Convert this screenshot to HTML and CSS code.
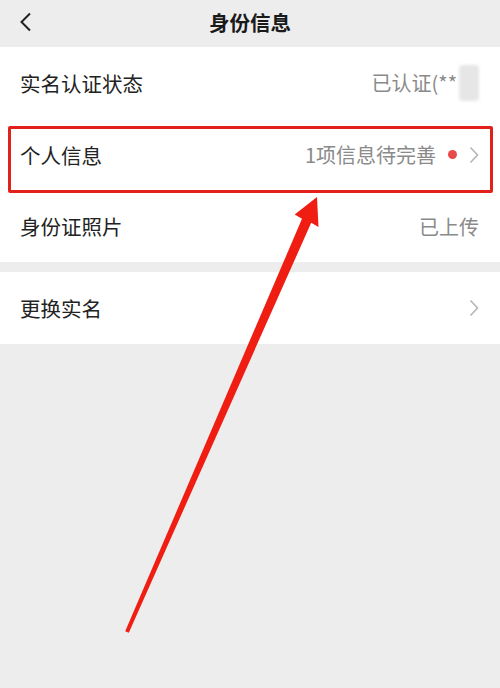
FILE: index.html
```html
<!DOCTYPE html>
<html lang="zh">
<head>
<meta charset="utf-8">
<link rel="stylesheet" href="styles.css">
</head>
<body>
<div class="page">
  <header class="nav">
    <svg class="back" width="14" height="20" viewBox="0 0 14 20"><path d="M11 1.5 L2.5 10 L11 18.5" fill="none" stroke="#222" stroke-width="2"/></svg>
    <div class="title">身份信息</div>
  </header>
  <section class="group">
    <div class="row">
      <span class="label">实名认证状态</span>
      <span class="value">已认证(**<span class="blur"></span></span>
    </div>
    <div class="row">
      <span class="label">个人信息</span>
      <span class="value">1项信息待完善<span class="dot"></span><svg class="chev" width="10" height="18" viewBox="0 0 10 18"><path d="M1.5 1.5 L8.5 9 L1.5 16.5" fill="none" stroke="#b5b5b5" stroke-width="1.6"/></svg></span>
    </div>
    <div class="row">
      <span class="label">身份证照片</span>
      <span class="value">已上传</span>
    </div>
  </section>
  <section class="group">
    <div class="row">
      <span class="label">更换实名</span>
      <span class="value"><svg class="chev" width="10" height="18" viewBox="0 0 10 18"><path d="M1.5 1.5 L8.5 9 L1.5 16.5" fill="none" stroke="#b5b5b5" stroke-width="1.6"/></svg></span>
    </div>
  </section>
  <div class="highlight"></div>
  <svg class="arrow" width="500" height="688" viewBox="0 0 500 688">
    <polygon points="317,197 318.5,227 311.2,222.8 128.8,632.8 125.2,631.2 302,218.8 294.7,214.6" fill="#f01e12"/>
  </svg>
</div>
</body>
</html>
```
FILE: styles.css
```css
html, body {
  margin: 0;
  padding: 0;
  background: #ededed;
}
.page {
  position: relative;
  width: 500px;
  height: 688px;
  overflow: hidden;
  font-family: "Noto Sans CJK SC", "Noto Sans", sans-serif;
  background: #ededed;
}
.nav {
  height: 47px;
  display: flex;
  align-items: center;
  justify-content: center;
  position: relative;
}
.back {
  position: absolute;
  left: 19px;
  top: 12px;
}
.title {
  font-size: 20.5px;
  font-weight: 700;
  color: #1a1a1a;
  margin-top: -3px;
}
.group {
  background: #fff;
  margin-bottom: 10px;
}
.row {
  height: 71.7px;
  display: flex;
  align-items: center;
  justify-content: space-between;
  padding: 0 21px 0 20px;
}
.label {
  font-size: 20.5px;
  color: #222;
}
.value {
  font-size: 20px;
  color: #8a8a8a;
  display: flex;
  align-items: center;
}
.blur {
  display: inline-block;
  width: 20px;
  height: 36px;
  background: #e6e6e6;
  margin-left: 2px;
  border-radius: 4px;
  filter: blur(1.5px);
}
.dot {
  display: inline-block;
  width: 9px;
  height: 9px;
  border-radius: 50%;
  background: #e84a4a;
  margin: 0 12px 0 12px;
}
.chev {
  display: block;
}
.highlight {
  position: absolute;
  left: 8px;
  top: 126px;
  width: 479px;
  height: 61px;
  border: 3px solid #e2201c;
  border-radius: 2px;
}
.arrow {
  position: absolute;
  left: 0;
  top: 0;
}
```
